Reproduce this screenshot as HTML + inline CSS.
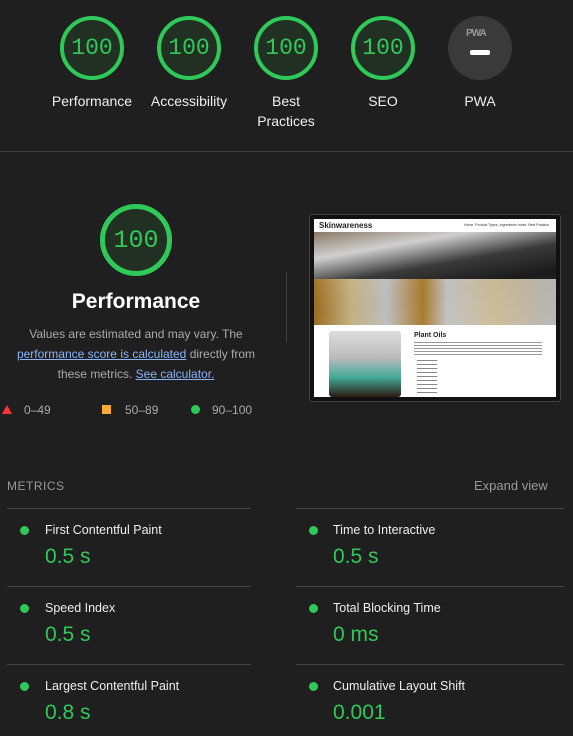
<!DOCTYPE html>
<html><head><meta charset="utf-8"><style>
*{margin:0;padding:0;box-sizing:border-box}
body{width:573px;height:736px;background:#1f1f1f;font-family:"Liberation Sans",sans-serif;position:relative;overflow:hidden;color:#fff}
.a{position:absolute}
.g{position:absolute;width:64px;height:64px;border-radius:50%;border:4px solid #2fc95a;background:#213022;color:#2fc95a;font-family:"Liberation Mono",monospace;font-size:23px;display:flex;align-items:center;justify-content:center}
.lbl{position:absolute;width:100px;text-align:center;font-size:14px;color:#f0f0f0;line-height:20px}
.hr{position:absolute;height:1px;background:#444}
.dot{position:absolute;width:9px;height:9px;border-radius:50%;background:#2fc95a}
.mt{position:absolute;font-size:12.5px;color:#eee}
.mv{position:absolute;font-size:21px;color:#2fc95a}
</style></head><body>
<div class="g" style="left:60px;top:16px">100</div>
<div class="g" style="left:157px;top:16px">100</div>
<div class="g" style="left:254px;top:16px">100</div>
<div class="g" style="left:351px;top:16px">100</div>
<div class="a" style="left:448px;top:16px;width:64px;height:64px;border-radius:50%;background:#3a3a3a"></div>
<div class="a" style="left:466px;top:28px;font-size:10px;font-weight:bold;color:#999;letter-spacing:-1px">PWA</div>
<div class="a" style="left:470px;top:50px;width:20px;height:5px;border-radius:2px;background:#fff"></div>
<div class="lbl" style="left:42px;top:91px">Performance</div>
<div class="lbl" style="left:139px;top:91px">Accessibility</div>
<div class="lbl" style="left:236px;top:91px">Best<br>Practices</div>
<div class="lbl" style="left:333px;top:91px">SEO</div>
<div class="lbl" style="left:430px;top:91px">PWA</div>
<div class="hr" style="left:0;top:151px;width:573px;background:#3c3c3c"></div>

<div class="g" style="left:100px;top:204px;width:72px;height:72px;border-width:5px;font-size:25px">100</div>
<div class="a" style="left:0;top:290px;width:272px;text-align:center;font-size:21px;font-weight:bold">Performance</div>
<div class="a" style="left:0;top:324px;width:272px;text-align:center;font-size:12px;line-height:20px;color:#aaa">Values are estimated and may vary. The<br><span style="color:#8ab4f8;text-decoration:underline">performance score is calculated</span> directly from<br>these metrics. <span style="color:#8ab4f8;text-decoration:underline">See calculator.</span></div>
<div class="a" style="left:286px;top:272px;width:1px;height:70px;background:#444"></div>
<div class="a" style="left:2px;top:405px;width:0;height:0;border-left:5px solid transparent;border-right:5px solid transparent;border-bottom:9px solid #f33"></div>
<div class="a" style="left:24px;top:403px;font-size:12px;color:#aaa">0–49</div>
<div class="a" style="left:102px;top:405px;width:9px;height:9px;background:#fa3"></div>
<div class="a" style="left:125px;top:403px;font-size:12px;color:#aaa">50–89</div>
<div class="dot" style="left:191px;top:405px"></div>
<div class="a" style="left:212px;top:403px;font-size:12px;color:#aaa">90–100</div>

<div class="a" style="left:309px;top:214px;width:252px;height:188px;border:1px solid #444;border-radius:3px;background:#111"></div>
<div class="a" style="left:314px;top:219px;width:242px;height:178px;background:#fff;overflow:hidden">
 <div class="a" style="left:5px;top:2px;font-size:8px;font-weight:bold;color:#222">Skinwareness</div>
 <div class="a" style="left:150px;top:4px;font-size:3.5px;color:#333;white-space:nowrap">Home &nbsp;Product Types &nbsp;Ingredients Index &nbsp;Best Practice</div>
 <div class="a" style="left:0;top:13px;width:242px;height:93px;background:linear-gradient(170deg,#8a7a65 0%,#d0d0d0 20%,#3a3a3a 40%,#1a1a1a 60%,#444 100%)"></div>
 <div class="a" style="left:0;top:60px;width:242px;height:46px;background:linear-gradient(90deg,#b07a20 0%,#e0c890 15%,#d9d9d9 30%,#c08a30 45%,#ddd 55%,#e8d4a8 75%,#ccc 100%);opacity:.85"></div>
 <div class="a" style="left:15px;top:112px;width:72px;height:66px;border-radius:3px;background:linear-gradient(180deg,#ddd 0%,#bbb 40%,#4a9 70%,#2a1a12 100%)"></div>
 <div class="a" style="left:100px;top:113px;font-size:7px;font-weight:bold;color:#222">Plant Oils</div>
 <div class="a" style="left:100px;top:123px;width:128px;height:14px;background:repeating-linear-gradient(180deg,#999 0 1px,#fff 1px 3px)"></div>
 <div class="a" style="left:103px;top:141px;width:20px;height:35px;background:repeating-linear-gradient(180deg,#888 0 1px,#fff 1px 4px)"></div>
</div>

<div class="a" style="left:7px;top:479px;font-size:12px;color:#999;letter-spacing:.5px">METRICS</div>
<div class="a" style="left:474px;top:478px;font-size:13px;color:#999">Expand view</div>
<div class="hr" style="left:7px;top:508px;width:244px"></div>
<div class="hr" style="left:296px;top:508px;width:268px"></div>
<div class="hr" style="left:7px;top:586px;width:244px"></div>
<div class="hr" style="left:296px;top:586px;width:268px"></div>
<div class="hr" style="left:7px;top:664px;width:244px"></div>
<div class="hr" style="left:296px;top:664px;width:268px"></div>

<div class="dot" style="left:20px;top:526px"></div><div class="mt" style="left:45px;top:523px">First Contentful Paint</div><div class="mv" style="left:45px;top:545px">0.5 s</div>
<div class="dot" style="left:309px;top:526px"></div><div class="mt" style="left:333px;top:523px">Time to Interactive</div><div class="mv" style="left:333px;top:545px">0.5 s</div>
<div class="dot" style="left:20px;top:604px"></div><div class="mt" style="left:45px;top:601px">Speed Index</div><div class="mv" style="left:45px;top:623px">0.5 s</div>
<div class="dot" style="left:309px;top:604px"></div><div class="mt" style="left:333px;top:601px">Total Blocking Time</div><div class="mv" style="left:333px;top:623px">0 ms</div>
<div class="dot" style="left:20px;top:682px"></div><div class="mt" style="left:45px;top:679px">Largest Contentful Paint</div><div class="mv" style="left:45px;top:701px">0.8 s</div>
<div class="dot" style="left:309px;top:682px"></div><div class="mt" style="left:333px;top:679px">Cumulative Layout Shift</div><div class="mv" style="left:333px;top:701px">0.001</div>
</body></html>
